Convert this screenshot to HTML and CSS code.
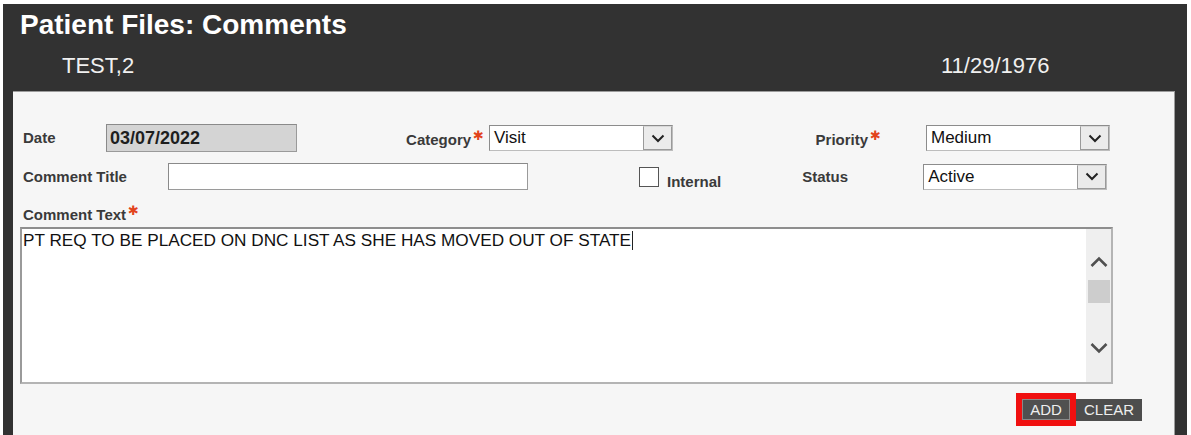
FILE: index.html
```html
<!DOCTYPE html>
<html>
<head>
<meta charset="utf-8">
<link rel="stylesheet" href="styles.css">
</head>
<body>
<div class="screen">
  <div class="title">Patient Files: Comments</div>
  <div class="patient">
    <span class="pname">TEST,2</span>
    <span class="pdob">11/29/1976</span>
  </div>
  <div class="panel">
    <div class="row row1">
      <div class="lbl lbl-date">Date</div>
      <div class="field field-date">03/07/2022</div>
      <div class="lbl lbl-cat">Category<span class="req">✱</span></div>
      <div class="select">
        <div class="select-val">Visit</div>
        <div class="select-btn"><svg width="14" height="9" viewBox="0 0 14 9"><polyline points="1.5,1.5 7,7 12.5,1.5" fill="none" stroke="#222" stroke-width="2"/></svg></div>
      </div>
      <div class="lbl lbl-pri">Priority<span class="req">✱</span></div>
      <div class="select">
        <div class="select-val">Medium</div>
        <div class="select-btn"><svg width="14" height="9" viewBox="0 0 14 9"><polyline points="1.5,1.5 7,7 12.5,1.5" fill="none" stroke="#222" stroke-width="2"/></svg></div>
      </div>
    </div>
    <div class="row row2">
      <div class="lbl lbl-title">Comment Title</div>
      <div class="field field-title"></div>
      <div class="checkbox"></div>
      <div class="lbl lbl-internal">Internal</div>
      <div class="lbl lbl-status">Status</div>
      <div class="select">
        <div class="select-val">Active</div>
        <div class="select-btn"><svg width="14" height="9" viewBox="0 0 14 9"><polyline points="1.5,1.5 7,7 12.5,1.5" fill="none" stroke="#222" stroke-width="2"/></svg></div>
      </div>
    </div>
    <div class="lbl lbl-text">Comment Text<span class="req">✱</span></div>
    <div class="textarea">
      <div class="ta-text">PT REQ TO BE PLACED ON DNC LIST AS SHE HAS MOVED OUT OF STATE<span class="caret"></span></div>
      <div class="scrollbar">
        <svg class="sb-up" width="20" height="13" viewBox="0 0 20 13"><polyline points="2.5,11 10,3.5 17.5,11" fill="none" stroke="#505050" stroke-width="2.6"/></svg>
        <div class="sb-thumb"></div>
        <svg class="sb-down" width="20" height="13" viewBox="0 0 20 13"><polyline points="2.5,2 10,9.5 17.5,2" fill="none" stroke="#505050" stroke-width="2.6"/></svg>
      </div>
    </div>
    <div class="buttons">
      <div class="btn btn-add">ADD</div>
      <div class="btn btn-clear">CLEAR</div>
    </div>
  </div>
</div>
</body>
</html>
```
FILE: styles.css
```css
html, body {
  margin: 0;
  padding: 0;
  background: #ffffff;
}
body {
  padding: 4px 4px 0 3px;
  font-family: "Liberation Sans", Arial, sans-serif;
  overflow: hidden;
}
.screen {
  background: #323232;
  height: 431px;
  padding: 6px 12px 0 10px;
  box-sizing: border-box;
}
.title {
  color: #ffffff;
  font-weight: bold;
  font-size: 28px;
  line-height: 30px;
  margin-left: 7px;
}
.patient {
  display: flex;
  margin-top: 14px;
  color: #f0f0f0;
  font-size: 22px;
  line-height: 24px;
}
.pname {
  margin-left: 49px;
  width: 879px;
}
.panel {
  background: #f6f6f6;
  border-top: 1px solid #9c9c9c;
  border-right: 1px solid #9c9c9c;
  margin-top: 13px;
  padding: 32px 0 30px 7px;
}
.row {
  display: flex;
  align-items: center;
  padding-left: 3px;
}
.row2 {
  margin-top: 11px;
}
.lbl {
  color: #3a3a3a;
  font-weight: bold;
  font-size: 15px;
  line-height: 18px;
  white-space: nowrap;
}
.req {
  font-family: "DejaVu Sans", sans-serif;
  color: #e2431c;
  font-size: 13px;
  font-weight: bold;
  vertical-align: 5px;
  margin-left: 2px;
}
.lbl-date { width: 83px; }
.field {
  box-sizing: border-box;
  border: 1px solid #9a9a9a;
  border-top-color: #8a8a8a;
  border-left-color: #8a8a8a;
}
.field-date {
  width: 191px;
  height: 28px;
  background: #d4d4d4;
  font-weight: bold;
  font-size: 18px;
  line-height: 26px;
  color: #1e1e1e;
  padding-left: 3px;
}
.lbl-cat {
  width: 192px;
  box-sizing: border-box;
  text-align: right;
  padding-right: 5px;
}
.lbl-pri {
  width: 253px;
  box-sizing: border-box;
  text-align: right;
  padding-right: 45px;
}
.select {
  display: flex;
  width: 184px;
  height: 26px;
  box-sizing: border-box;
  background: #ffffff;
  border: 1px solid #8c8c8c;
  border-right-color: #bdbdbd;
  border-bottom-color: #bdbdbd;
}
.select-val {
  flex: 1;
  font-size: 17px;
  line-height: 23px;
  color: #111;
  padding-left: 4px;
}
.select-btn {
  width: 29px;
  box-sizing: border-box;
  background: #ebebeb;
  border: 1px solid #9a9a9a;
  border-top-color: #d8d8d8;
  display: flex;
  align-items: center;
  justify-content: center;
}
.lbl-title { width: 145px; }
.field-title {
  width: 360px;
  height: 27px;
  background: #ffffff;
}
.checkbox {
  margin-left: 111px;
  width: 20px;
  height: 20px;
  box-sizing: border-box;
  background: #ffffff;
  border: 1px solid #555555;
}
.lbl-internal {
  align-self: flex-end;
  margin-left: 8px;
  margin-bottom: -1px;
}
.lbl-status {
  margin-left: 81px;
  width: 121px;
}
.lbl-text {
  margin-top: 12px;
  padding-left: 3px;
}
.textarea {
  margin-top: 3px;
  width: 1093px;
  height: 157px;
  box-sizing: border-box;
  display: flex;
  background: #ffffff;
  border: 2px solid #b4b4b4;
  border-top-color: #8e8e8e;
  border-left-color: #9a9a9a;
}
.ta-text {
  flex: 1;
  font-size: 17.2px;
  line-height: 20px;
  color: #111;
  padding: 1px 0 0 1px;
}
.caret {
  display: inline-block;
  width: 0;
  height: 19px;
  border-left: 1px solid #222;
  vertical-align: -4px;
  margin-left: 1px;
}
.scrollbar {
  width: 25px;
  background: #efefef;
  display: flex;
  flex-direction: column;
  align-items: center;
  padding-top: 26px;
}
.sb-thumb {
  margin-top: 12px;
  width: 22px;
  height: 23px;
  background: #cdcdcd;
}
.sb-down {
  margin-top: 39px;
}
.buttons {
  display: flex;
  justify-content: flex-end;
  margin-top: 15px;
  padding-right: 32px;
}
.btn {
  box-sizing: border-box;
  color: #eeeeee;
  font-size: 15px;
  line-height: 20px;
  text-align: center;
}
.btn-add {
  width: 48px;
  height: 21px;
  background: #505050;
  border: 1px solid #8a8a8a;
  outline: 6px solid #f01010;
}
.btn-clear {
  margin-left: 6px;
  width: 66px;
  height: 22px;
  line-height: 22px;
  background: #4d4d4d;
}
```
